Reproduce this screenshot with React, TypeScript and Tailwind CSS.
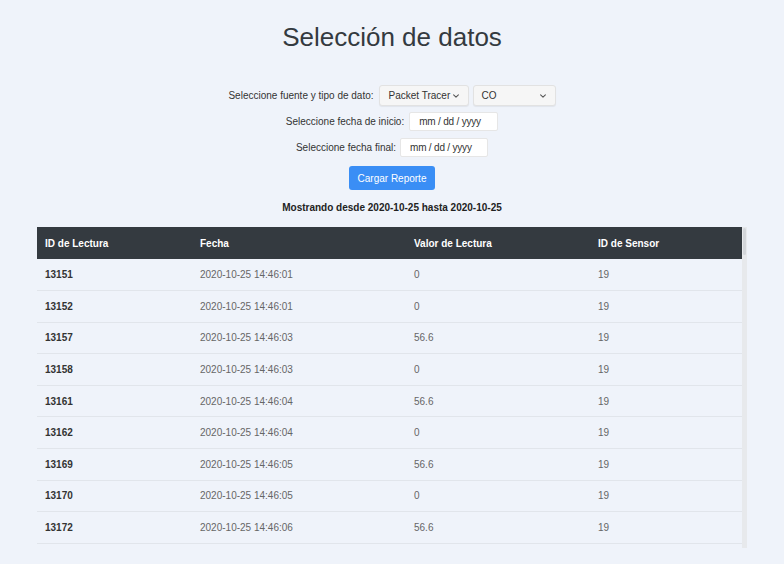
import * as React from "react";

const rows = [
  { id: 13151, fecha: "2020-10-25 14:46:01", valor: "0", sensor: 19 },
  { id: 13152, fecha: "2020-10-25 14:46:01", valor: "0", sensor: 19 },
  { id: 13157, fecha: "2020-10-25 14:46:03", valor: "56.6", sensor: 19 },
  { id: 13158, fecha: "2020-10-25 14:46:03", valor: "0", sensor: 19 },
  { id: 13161, fecha: "2020-10-25 14:46:04", valor: "56.6", sensor: 19 },
  { id: 13162, fecha: "2020-10-25 14:46:04", valor: "0", sensor: 19 },
  { id: 13169, fecha: "2020-10-25 14:46:05", valor: "56.6", sensor: 19 },
  { id: 13170, fecha: "2020-10-25 14:46:05", valor: "0", sensor: 19 },
  { id: 13172, fecha: "2020-10-25 14:46:06", valor: "56.6", sensor: 19 },
];

const Chevron = () => (
  <svg width="8" height="8" viewBox="0 0 10 10" fill="none">
    <path d="M2 3.5 L5 6.5 L8 3.5" stroke="#555" strokeWidth="1.3" strokeLinecap="round" strokeLinejoin="round" />
  </svg>
);

const App = () => {
  return (
    <main
      className="min-h-screen bg-[#eff3fa] text-[#333] flex flex-col items-center pt-[22px]"
      style={{ fontFamily: '"Liberation Sans", Arial, sans-serif' }}
    >
      <h1 className="text-[26px] leading-[30px] text-[#343a40]">Selección de datos</h1>

      <div className="mt-[33px] h-[21px] flex items-center gap-[4px] text-[10px]">
        <span className="mr-[1px]">Seleccione fuente y tipo de dato:</span>
        <div className="w-[90px] h-[21px] flex items-center justify-between pl-[9px] pr-[8px] bg-[#f6f6f6] border border-[#e2e2e2] rounded-[3px] shadow-[0_1px_1px_rgba(0,0,0,0.06)]">
          <span>Packet Tracer</span>
          <Chevron />
        </div>
        <div className="w-[83px] h-[21px] flex items-center justify-between pl-[8px] pr-[8px] bg-[#f6f6f6] border border-[#e2e2e2] rounded-[3px] shadow-[0_1px_1px_rgba(0,0,0,0.06)]">
          <span>CO</span>
          <Chevron />
        </div>
      </div>

      <div className="mt-[6px] h-[19px] flex items-center gap-[5px] text-[10px]">
        <span>Seleccione fecha de inicio:</span>
        <div className="w-[89px] h-[19px] flex items-center pl-[9px] bg-white border border-[#e6e6e6] rounded-[2px] tracking-[-0.2px]">
          mm / dd / yyyy
        </div>
      </div>

      <div className="mt-[7px] h-[19px] flex items-center gap-[4px] text-[10px]">
        <span>Seleccione fecha final:</span>
        <div className="w-[88px] h-[19px] flex items-center pl-[9px] bg-white border border-[#e6e6e6] rounded-[2px] tracking-[-0.2px]">
          mm / dd / yyyy
        </div>
      </div>

      <button className="mt-[9px] w-[86px] h-[24px] rounded-[3px] bg-[#3a8ef5] text-white text-[10px]">
        Cargar Reporte
      </button>

      <p className="mt-[11px] h-[14px] leading-[14px] text-[10px] font-bold text-[#222]">
        Mostrando desde 2020-10-25 hasta 2020-10-25
      </p>

      <div className="mt-[12px] w-[710px] h-[321px] flex overflow-hidden">
        <table className="w-[705px] self-start table-fixed border-collapse text-[10px]">
          <colgroup>
            <col className="w-[155px]" />
            <col className="w-[214px]" />
            <col className="w-[184px]" />
            <col className="w-[152px]" />
          </colgroup>
          <thead>
            <tr className="h-[32px] bg-[#343a40] text-white text-left">
              <th className="pl-[8px] font-bold">ID de Lectura</th>
              <th className="pl-[8px] font-bold">Fecha</th>
              <th className="pl-[8px] font-bold">Valor de Lectura</th>
              <th className="pl-[8px] font-bold">ID de Sensor</th>
            </tr>
          </thead>
          <tbody>
            {rows.map((r) => (
              <tr key={r.id} className="h-[31.6px] border-b border-[#e1e5eb]">
                <td className="pl-[8px] font-bold text-[#333]">{r.id}</td>
                <td className="pl-[8px] text-[#666]">{r.fecha}</td>
                <td className="pl-[8px] text-[#666]">{r.valor}</td>
                <td className="pl-[8px] text-[#666]">{r.sensor}</td>
              </tr>
            ))}
          </tbody>
        </table>
        {/* scrollbar */}
        <div className="w-[5px] h-full bg-[#e7e9ec] flex flex-col">
          <div className="mt-[1px] h-[27px] mx-[1px] rounded-full bg-[#d3d6da]" />
        </div>
      </div>
    </main>
  );
};

export default App;
